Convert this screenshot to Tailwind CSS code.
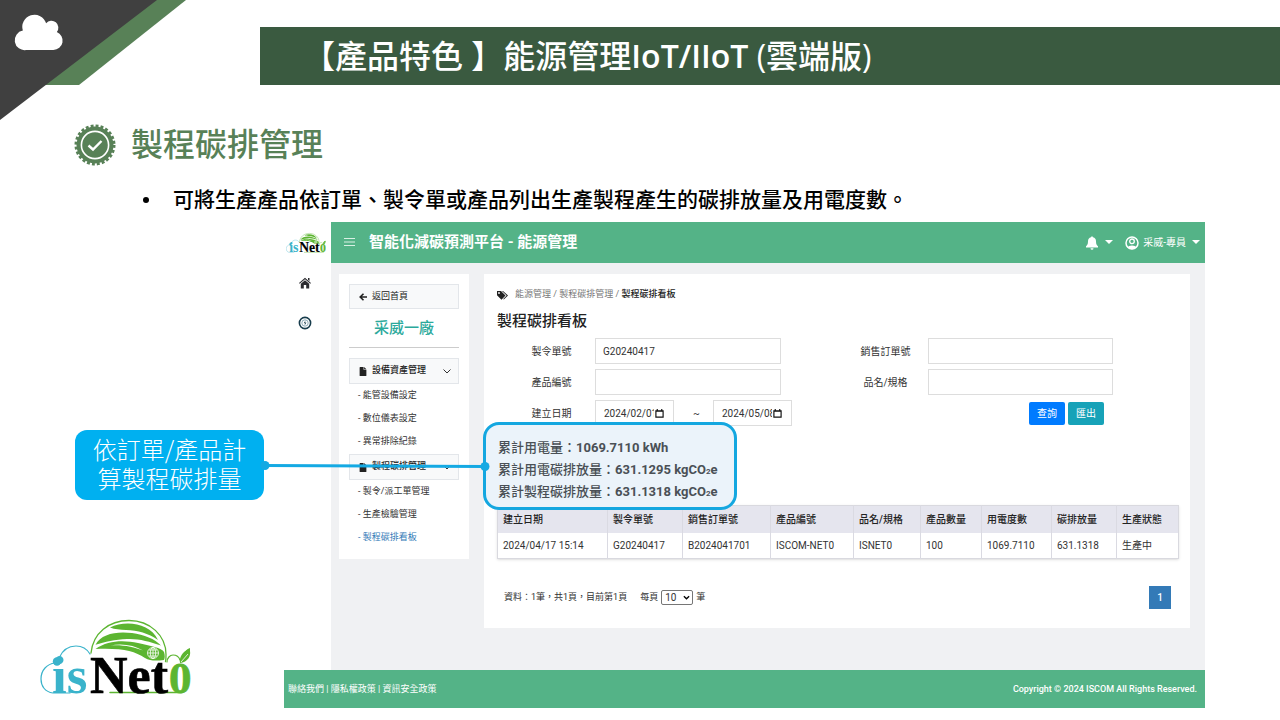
<!DOCTYPE html>
<html lang="zh-Hant">
<head>
<meta charset="utf-8">
<meta name="viewport" content="width=device-width, initial-scale=1">
<title>能源管理IoT/IIoT (雲端版)</title>
<script src="https://cdn.jsdelivr.net/npm/@tailwindcss/browser@4"></script>
</head>
<body class="relative min-h-screen overflow-x-hidden bg-white font-['Roboto','Noto_Sans_CJK_TC',sans-serif] text-[#333]">

<svg class="hidden" aria-hidden="true">
  <symbol id="logo" viewBox="20 18 152 78">
    <g fill="none" stroke-linecap="round">
      <path d="M50 93H33C25 92 21 86 21 79c0-9 6-15 14-16" stroke="#3ab3cb" stroke-width="1.2"/>
      <path d="M39 58c4-9 11-12 17-12 7 0 11 3 14 8" stroke="#3ab3cb" stroke-width="1.2"/>
      <path d="M71 53C73 33 89 20.500 109 20.500c21 0 37 15 37 34 0 3 0 5-.5 7" stroke="#5cb531" stroke-width="1.300"/>
      <path d="M147 62c0-4 3-7 6-7 4 0 6 2 7 5" stroke="#5cb531" stroke-width="1.200"/>
      <path d="M90 92.500h72" stroke="#5cb531" stroke-width="1.500"/>
    </g>
    <circle cx="37" cy="61.500" r="4.200" fill="#3ab3cb"/>
    <g fill="#5cb531">
      <path d="M90 27.500C104 20 130 22 138 40 128 33 118 30.500 106 30c-6-.5-11-.5-16-2.500z"/>
      <path d="M75.500 44.700C81 34 96 31 112 33c12 1.500 23 6 29 12.500-12-4-22-7-34-6.500-12 .3-22 3-31.500 5.700z"/>
      <path d="M75.500 49C88 40 104 40 118 43c12 2.500 24 5 26 9 1 3 1 6 0 8-8 1-14 1-19-2-11-7-22-10-49.500-9zM90 45.500c12-1 24 1.500 33 5-9-5.500-21-7.500-33-5z" fill-rule="evenodd"/>
      <path d="M160 63c-1-5 2-12 10-14v2c1 5-2 11-10 12z"/>
      <path d="M164 55c0-3 3-6 6-7v3z"/>
    </g>
    <g fill="none" stroke="#fff" stroke-width=".8">
      <path d="M161 62l7-8"/>
      <circle cx="133" cy="53" r="5.500"/>
      <path d="M127.500 53h11M133 47.500v11M129 50h8M129 56h8"/>
      <ellipse cx="133" cy="53" rx="2.700" ry="5.500"/>
    </g>
    <g font-family="'Liberation Serif',serif" font-weight="700">
      <text x="32" y="93" font-size="53" fill="#3ab3cb">is</text>
      <text x="70" y="93" font-size="52" fill="#000" stroke="#000" stroke-width=".6">Net</text>
      <text x="149" y="93" font-size="45" fill="#5cb531" stroke="#5cb531" stroke-width=".8">0</text>
    </g>
  </symbol>
  <symbol id="doc" viewBox="0 0 12 16"><path d="M0 1Q0 0 1 0H7V5H12V15Q12 16 11 16H1Q0 16 0 15zM8 0l4 4H8z" fill="#222"/></symbol>
  <symbol id="cal" viewBox="0 0 10 10"><path d="M1 2h8v7H1zM1 2.500h8M2.500 0v2M7.500 0v2" fill="none" stroke="#111" stroke-width="1.300"/></symbol>
</svg>

<svg class="absolute left-0 top-0 h-[120px] w-[190px]" viewBox="0 0 190 120" aria-hidden="true">
  <path d="M150 0h36L79 85H40z" fill="#588157"/>
  <path d="M0 0h157L0 120z" fill="#404040"/>
  <path d="M25 50a10 10 0 0 1-3.500-20A12 12 0 0 1 45.500 22.500a6.500 6.500 0 0 1 11 9A9.600 9.600 0 0 1 53 50z" transform="translate(2 1.500) scale(.97 .97)" fill="#fff"/>
</svg>

<header class="mt-[27px] ml-[260px] flex h-[58px] items-center bg-[#3a5a40] pl-[43px]">
  <h1 class="whitespace-pre font-['Open_Sans','Noto_Sans_CJK_TC',sans-serif] text-[32px] leading-none font-medium text-white">【產品特色 】能源管理<span class="font-semibold">IoT/IIoT </span>(雲端版)</h1>
</header>

<section class="mt-[39px] flex items-center gap-[15px] pl-[74px]">
  <svg class="size-[42px]" viewBox="0 0 42 42" aria-hidden="true">
    <circle cx="21" cy="21" r="18.500" fill="#588157"/>
    <circle cx="21" cy="21" r="18.800" fill="none" stroke="#588157" stroke-width="3.400" stroke-dasharray="2.900 2.022"/>
    <circle cx="21" cy="21" r="13.600" fill="none" stroke="#fff" stroke-width="1.600"/>
    <path d="M14.500 21.500l4.500 4 8.500-8.500" fill="none" stroke="#fff" stroke-width="2.400"/>
  </svg>
  <h2 class="pb-[6px] font-['Noto_Sans_CJK_TC',sans-serif] text-[32px] leading-[36px] font-medium text-[#588157]">製程碳排管理</h2>
</section>

<ul class="mt-[17px] flex h-[32px] items-center gap-[24px] pl-[143px] font-['Noto_Sans_CJK_TC',sans-serif] text-[21px] font-medium text-black">
  <li class="contents"><span class="mt-[2px] size-[6px] rounded-full bg-black"></span><span>可將生產產品依訂單、製令單或產品列出生產製程產生的碳排放量及用電度數。</span></li>
</ul>

<div class="mt-[7px] flex pr-[75px] pb-[12px]">
  <aside class="relative z-20 flex w-[284px] shrink-0 flex-col">
    <div class="relative mt-[208px] ml-[75px] flex h-[70px] w-[189px] items-center justify-center rounded-[12px] bg-[#00b0f0] pb-[4px] text-center font-['Noto_Sans_CJK_TC',sans-serif] text-[24px] leading-[29px] font-light text-white">
      <p>依訂單/產品計<br>算製程碳排量</p>
      <svg class="absolute top-[30px] left-[184px] h-[12px] w-[232px]" viewBox="0 0 232 12" aria-hidden="true">
        <path d="M5 5.500L226 6.500" stroke="#14a9e3" stroke-width="3"/>
        <circle cx="6" cy="5.500" r="4.500" fill="#14a9e3"/><circle cx="226" cy="6.500" r="4.500" fill="#14a9e3"/>
      </svg>
    </div>
    <svg class="mt-[118px] ml-[40px] h-[78px] w-[152px]" role="img" aria-label="isNet0"><use href="#logo"/></svg>
  </aside>

  <div class="flex min-w-0 flex-1 flex-col">
    <div class="flex">
      <nav class="flex w-[47px] shrink-0 flex-col items-center" aria-label="主選單">
        <svg class="mt-[10px] mr-[4px] h-[22px] w-[40px]" role="img" aria-label="isNet0"><use href="#logo"/></svg>
        <a href="#" aria-label="首頁" class="mt-[23px] mr-[5px]"><svg class="size-[12px]" viewBox="0 0 12 12"><path d="M6 0.800L12 6l-.7.8L6 2.300.7 6.800 0 6zM9 1h1.500v3L9 2.700zM6 3.200l4.200 3.500V11.500H7.200V8H4.800v3.500H1.800V6.700z" fill="#2c2c30"/></svg></a>
        <a href="#" aria-label="能源" class="mt-[27px] mr-[6px]"><svg class="size-[14px]" viewBox="0 0 14 14"><circle cx="7" cy="7" r="5.600" fill="#fff" stroke="#173c4c" stroke-width="1.600"/><circle cx="7" cy="7" r="3.200" fill="none" stroke="#5b8798" stroke-width=".7"/><path d="M7.500 4.200L5.800 7.300h1.300l-.6 2.500 1.900-3.300H7z" fill="#173c4c"/></svg></a>
      </nav>

      <div class="min-w-0 flex-1">
        <div class="flex h-[41px] items-center bg-[#54b387] pr-[5px] pb-[2px] pl-[13px] text-white">
          <button aria-label="選單"><svg class="block h-[8px] w-[11px]" viewBox="0 0 11 8"><path d="M0 .5h11M0 4h11M0 7.500h11" stroke="#d9f0e4"/></svg></button>
          <h3 class="ml-[14px] flex-1 text-[15px] leading-[20px] font-bold">智能化減碳預測平台 - 能源管理</h3>
          <button class="flex items-center gap-[7px]" aria-label="通知">
            <svg class="mt-[2px] h-[14px] w-[12px]" viewBox="0 0 12 14"><path d="M6 0l1 1.200C9 1.700 10 3.200 10 5.200c0 3 .8 4 2 5V11.500H0V10.200c1.200-1 2-2 2-5 0-2 1-3.500 3-4zM4.500 12.200h3a1.500 1.500 0 0 1-3 0z" fill="#fff"/></svg>
            <svg class="h-[4px] w-[8px]" viewBox="0 0 8 4"><path d="M0 0h8L4 4z" fill="#fff"/></svg>
          </button>
          <button class="ml-[12px] flex items-center pt-[2px] text-[10px]">
            <svg class="mr-[4px] size-[14px]" viewBox="0 0 14 14"><circle cx="7" cy="7" r="6" fill="none" stroke="#fff" stroke-width="1.500"/><circle cx="7" cy="5.300" r="2.300" fill="none" stroke="#fff" stroke-width="1.300"/><path d="M2.500 11.500c1-2.700 8-2.700 9 0-2 2.300-7 2.300-9 0z" fill="#fff"/></svg>
            采威-專員
            <svg class="mb-[2px] ml-[6px] h-[4px] w-[8px]" viewBox="0 0 8 4"><path d="M0 0h8L4 4z" fill="#fff"/></svg>
          </button>
        </div>

        <div class="flex min-h-[407px] items-start gap-[15px] bg-[#f0f1f3] pt-[11px] pr-[15px] pl-[8px]">
          <nav class="w-[130px] shrink-0 bg-white px-[10px] pt-[10px] pb-[10px] text-[9px]" aria-label="能源管理">
            <a href="#" class="flex h-[25px] items-center gap-[5px] border border-[#e3e6ea] bg-[#f8f9fa] pl-[9px] text-[#222]">
              <svg class="h-[8px] w-[8px]" viewBox="0 0 8 8"><path d="M8 4H1.500M4.500 .8L1.200 4l3.300 3.200" fill="none" stroke="#222" stroke-width="1.600"/></svg>返回首頁</a>
            <h4 class="border-b border-[#ccc] pt-[9px] pb-[9px] text-center text-[15px] leading-[20px] font-medium text-[#2ba99b]">采威一廠</h4>
            <button class="mt-[10px] flex h-[26px] w-full items-center border border-[#e3e6ea] bg-[#f8f9fa] pr-[7px] pl-[9px] font-medium text-[#222]">
              <svg class="mr-[5px] h-[9px] w-[8px]"><use href="#doc"/></svg>設備資產管理
              <svg class="ml-auto h-[5px] w-[8px]" viewBox="0 0 8 5"><path d="M.5 .5L4 4 7.500 .5" fill="none" stroke="#333"/></svg></button>
            <ul class="pb-px pl-[9px] leading-[23px]">
              <li><a href="#">- 能管設備設定</a></li><li><a href="#">- 數位儀表設定</a></li><li><a href="#">- 異常排除紀錄</a></li>
            </ul>
            <button class="flex h-[26px] w-full items-center border border-[#e3e6ea] bg-[#f8f9fa] pr-[7px] pl-[9px] font-medium text-[#222]">
              <svg class="mr-[5px] h-[9px] w-[8px]"><use href="#doc"/></svg>製程碳排管理
              <svg class="ml-auto h-[5px] w-[8px]" viewBox="0 0 8 5"><path d="M.5 .5L4 4 7.500 .5" fill="none" stroke="#333"/></svg></button>
            <ul class="pl-[9px] leading-[23px]">
              <li><a href="#">- 製令/派工單管理</a></li><li><a href="#">- 生產檢驗管理</a></li><li><a href="#" class="text-[#337ab7]">- 製程碳排看板</a></li>
            </ul>
          </nav>

          <main class="min-w-0 flex-1 bg-white px-[13px] pt-[13px] pb-[19px] text-[10px]">
            <div class="flex h-[16px] items-center text-[9px] text-[#777]">
              <svg class="mr-[7px] h-[9px] w-[11px]" viewBox="0 0 11 9"><path d="M0 0h4l4.500 4.500L4.500 8.800 0 4.300zM5 0h1l5 4.600-4.200 4-.6-.6 3.400-3.400z" fill="#222"/><circle cx="2" cy="2" r=".9" fill="#fff"/></svg>
              <a href="#">能源管理</a><span class="whitespace-pre"> / </span><a href="#">製程碳排管理</a><span class="whitespace-pre"> / </span><span class="font-medium text-[#222]">製程碳排看板</span>
            </div>
            <h3 class="mt-[8px] text-[15px] leading-[20px] font-medium text-[#222]">製程碳排看板</h3>

            <form class="mt-[7px] grid grid-cols-[98px_minmax(0,1fr)_147px_minmax(0,1fr)_64px] items-center gap-y-[5px]">
              <label for="mo" class="pl-[11px] text-center">製令單號</label>
              <input id="mo" value="G20240417" class="h-[26px] w-full border border-[#ddd] px-[7px]">
              <label for="so" class="pl-[63px] text-center">銷售訂單號</label>
              <input id="so" class="h-[26px] w-full border border-[#ddd] px-[7px]"><span></span>
              <label for="pn" class="pl-[11px] text-center">產品編號</label>
              <input id="pn" class="h-[26px] w-full border border-[#ddd] px-[7px]">
              <label for="sp" class="pl-[63px] text-center">品名/規格</label>
              <input id="sp" class="h-[26px] w-full border border-[#ddd] px-[7px]"><span></span>
              <label for="d1" class="pl-[11px] text-center">建立日期</label>
              <div class="col-span-2 flex items-center">
                <span class="flex h-[26px] w-[79px] items-center border border-[#ddd] pl-[8px]"><input id="d1" value="2024/02/01" class="w-[50px]"><svg class="ml-px size-[9px]"><use href="#cal"/></svg></span>
                <span class="w-[39px] pl-[6px] text-center">~</span>
                <span class="flex h-[26px] w-[79px] items-center border border-[#ddd] pl-[8px]"><input aria-label="結束日期" value="2024/05/08" class="w-[50px]"><svg class="ml-px size-[9px]"><use href="#cal"/></svg></span>
              </div>
              <div class="flex justify-end gap-[3px] pr-[9px] text-white">
                <button type="button" class="h-[23px] w-[36px] rounded-[2px] bg-[#007bff]">查詢</button>
                <button type="button" class="h-[23px] w-[36px] rounded-[2px] bg-[#17a2b8]">匯出</button>
              </div>
            </form>

            <div class="relative z-10 -mt-[4px] -ml-[14px] w-[254px] rounded-[16px] border-[3px] border-[#14a7e0] bg-[#ebf3fa] px-[12px] pt-[12px] pb-[4px] text-[13px] leading-[22px] font-medium text-[#4a5056]">
              <p>累計用電量：<b>1069.7110 kWh</b></p>
              <p>累計用電碳排放量：<b>631.1295 kgCO<span class="text-[8px] leading-none">2</span>e</b></p>
              <p>累計製程碳排放量：<b>631.1318 kgCO<span class="text-[8px] leading-none">2</span>e</b></p>
            </div>

            <table class="-mt-[5px] w-full table-fixed border border-[#d9d9df] text-left shadow-sm">
              <colgroup><col class="w-[110px]"><col class="w-[75px]"><col class="w-[88px]"><col class="w-[83px]"><col class="w-[67px]"><col class="w-[61px]"><col class="w-[70px]"><col class="w-[65px]"><col class="w-[62px]"></colgroup>
              <thead class="bg-[#e5e5ee] text-[#222]">
                <tr class="h-[27px] divide-x divide-[#dadae2] *:px-[5px] *:font-medium"><th>建立日期</th><th>製令單號</th><th>銷售訂單號</th><th>產品編號</th><th>品名/規格</th><th>產品數量</th><th>用電度數</th><th>碳排放量</th><th>生產狀態</th></tr>
              </thead>
              <tbody>
                <tr class="h-[26px] divide-x divide-[#dadae2] *:px-[5px]"><td>2024/04/17 15:14</td><td>G20240417</td><td>B2024041701</td><td>ISCOM-NET0</td><td>ISNET0</td><td>100</td><td>1069.7110</td><td>631.1318</td><td>生產中</td></tr>
              </tbody>
            </table>

            <div class="mt-[27px] flex h-[23px] items-center pr-[6px] pl-[7px] text-[9px]">
              <span>資料：1筆，共1頁，目前第1頁</span>
              <label for="size" class="ml-[13px]">每頁</label>
              <select id="size" class="mx-[3px] h-[15px] w-[32px] appearance-none rounded-[2px] border border-[#767676] bg-[url('data:image/svg+xml,%3Csvg%20xmlns=%22http://www.w3.org/2000/svg%22%20viewBox=%220%200%208%205%22%3E%3Cpath%20d=%22M1%201l3%203%203-3%22%20fill=%22none%22%20stroke=%22black%22%20stroke-width=%221.5%22/%3E%3C/svg%3E')] bg-[length:7px_5px] bg-[position:right_2px_center] bg-no-repeat pl-[3px] text-[10px] leading-none"><option>10</option></select>
              <span>筆</span>
              <button class="ml-auto h-[23px] w-[22px] bg-[#337ab7] text-[10px] font-medium text-white">1</button>
            </div>
          </main>
        </div>
      </div>
    </div>

    <footer class="flex h-[38px] items-center justify-between bg-[#54b387] pr-[8px] pl-[4px] text-white">
      <p class="pt-[2px] text-[9px]"><a href="#">聯絡我們</a> | <a href="#">隱私權政策</a> | <a href="#">資訊安全政策</a></p>
      <p class="pt-[2px] text-[9px] font-medium">Copyright © 2024 ISCOM All Rights Reserved.</p>
    </footer>
  </div>
</div>
</body>
</html>
